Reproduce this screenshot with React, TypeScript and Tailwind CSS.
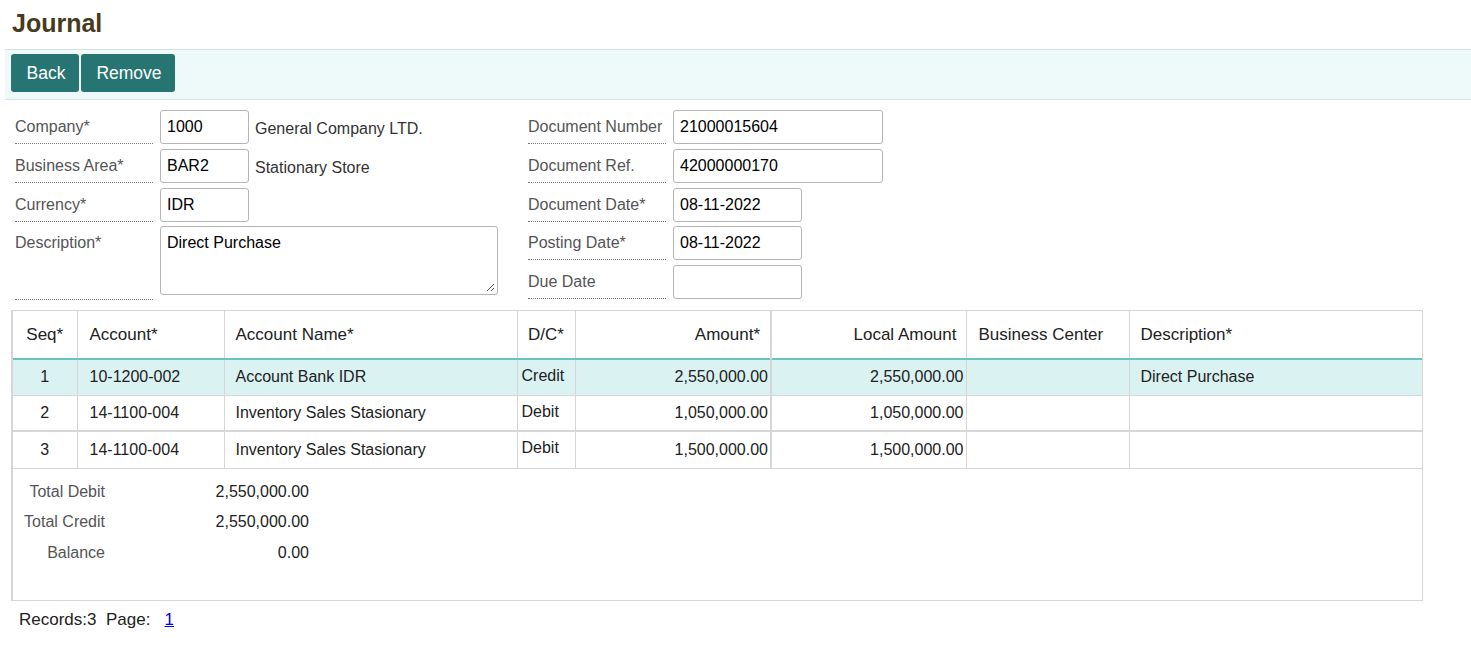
import React from "react";

const font = { fontFamily: '"Liberation Sans", Arial, sans-serif' };

function Label({ children, h = "h-[34px]" }: { children: React.ReactNode; h?: string }) {
  return (
    <div className={`w-[138px] ${h} border-b border-dotted border-[#777] text-[16px] text-[#555] pt-[5px] shrink-0`}>
      {children}
    </div>
  );
}

function Input({ w, value }: { w: string; value: string }) {
  return (
    <div className={`${w} h-[34px] border border-[#b5b5b5] rounded-[3px] px-[6px] flex items-center text-[16px] text-black bg-white shrink-0`}>
      {value}
    </div>
  );
}

const rows = [
  { seq: "1", acc: "10-1200-002", name: "Account Bank IDR", dc: "Credit", amt: "2,550,000.00", local: "2,550,000.00", desc: "Direct Purchase", sel: true },
  { seq: "2", acc: "14-1100-004", name: "Inventory Sales Stasionary", dc: "Debit", amt: "1,050,000.00", local: "1,050,000.00", desc: "", sel: false },
  { seq: "3", acc: "14-1100-004", name: "Inventory Sales Stasionary", dc: "Debit", amt: "1,500,000.00", local: "1,500,000.00", desc: "", sel: false },
];

export default function App() {
  return (
    <div className="w-[1471px] h-[659px] bg-white text-[#222]" style={font}>
      <h1 className="text-[25px] font-bold text-[#463b1c] pl-[12px] pt-[8px] h-[49px] leading-[30px]">Journal</h1>
      <div className="ml-[5px] h-[51px] border-t border-b border-[#d6e2e2] bg-[#eef9f9] flex items-start pt-[4px] gap-[2px] pl-[6px]">
        <button className="w-[68px] h-[38px] rounded-[3px] bg-[#277572] text-white text-[17.5px] pl-[2px]">Back</button>
        <button className="w-[94px] h-[38px] rounded-[3px] bg-[#277572] text-white text-[17.5px] pl-[2px]">Remove</button>
      </div>

      <div className="flex pt-[10px] pl-[15px]">
        <div className="w-[513px] flex flex-col gap-[5px]">
          <div className="flex gap-[7px] items-start">
            <Label>Company*</Label>
            <Input w="w-[89px]" value="1000" />
            <div className="text-[16px] text-[#333] pt-[7px] ml-[-1px]">General Company LTD.</div>
          </div>
          <div className="flex gap-[7px] items-start">
            <Label>Business Area*</Label>
            <Input w="w-[89px]" value="BAR2" />
            <div className="text-[16px] text-[#333] pt-[7px] ml-[-1px]">Stationary Store</div>
          </div>
          <div className="flex gap-[7px] items-start">
            <Label>Currency*</Label>
            <Input w="w-[89px]" value="IDR" />
          </div>
          <div className="flex gap-[7px] items-start mt-[-1px]">
            <Label h="h-[74px]">Description*</Label>
            <div className="relative w-[338px] h-[69px] border border-[#b5b5b5] rounded-[3px] px-[6px] pt-[4px] text-[16px] text-black">
              Direct Purchase
              <svg className="absolute right-[2px] bottom-[2px]" width="10" height="10" viewBox="0 0 10 10">
                <path d="M9 2 L2 9 M9 6 L6 9" stroke="#555" strokeWidth="1" />
              </svg>
            </div>
          </div>
        </div>
        <div className="flex flex-col gap-[5px]">
          <div className="flex gap-[7px]">
            <Label>Document Number</Label>
            <Input w="w-[210px]" value="21000015604" />
          </div>
          <div className="flex gap-[7px]">
            <Label>Document Ref.</Label>
            <Input w="w-[210px]" value="42000000170" />
          </div>
          <div className="flex gap-[7px]">
            <Label>Document Date*</Label>
            <Input w="w-[129px]" value="08-11-2022" />
          </div>
          <div className="flex gap-[7px] mt-[-1px]">
            <Label>Posting Date*</Label>
            <Input w="w-[129px]" value="08-11-2022" />
          </div>
          <div className="flex gap-[7px]">
            <Label>Due Date</Label>
            <Input w="w-[129px]" value="" />
          </div>
        </div>
      </div>

      <div className="ml-[11px] mt-[10px] w-[1412px] h-[291px] border-l-2 border-r border-t border-b border-[#d6d6d6] flex flex-col">
        <table className="table-fixed border-collapse w-[1409px] text-[16px] text-[#222]">
          <colgroup>
            <col className="w-[64px]" />
            <col className="w-[147px]" />
            <col className="w-[293px]" />
            <col className="w-[58px]" />
            <col className="w-[196px]" />
            <col className="w-[195px]" />
            <col className="w-[163px]" />
            <col className="w-[293px]" />
          </colgroup>
          <thead>
            <tr className="h-[48px] border-b-2 border-[#66c6be] text-[17px]">
              <th className="font-normal text-center border-r border-[#d6d6d6]">Seq*</th>
              <th className="font-normal text-left pl-[12px] border-r border-[#d6d6d6]">Account*</th>
              <th className="font-normal text-left pl-[11px] border-r border-[#d6d6d6]">Account Name*</th>
              <th className="font-normal text-center border-r border-[#d6d6d6]">D/C*</th>
              <th className="font-normal text-right pr-[10px] border-r-2 border-[#d6d6d6]">Amount*</th>
              <th className="font-normal text-right pr-[9px] border-r border-[#d6d6d6]">Local Amount</th>
              <th className="font-normal text-left pl-[12px] border-r border-[#d6d6d6]">Business Center</th>
              <th className="font-normal text-left pl-[11px]">Description*</th>
            </tr>
          </thead>
          <tbody>
            {rows.map((r, i) => (
              <tr
                key={i}
                className={`${i === 0 ? "h-[36px] bg-[#daf2f2]" : i === 1 ? "h-[36px]" : "h-[37px] border-t-2 border-[#d6d6d6]"} border-b border-[#d6d6d6]`}
              >
                <td className="text-center border-r border-[#d6d6d6]">{r.seq}</td>
                <td className="pl-[12px] border-r border-[#d6d6d6]">{r.acc}</td>
                <td className="pl-[11px] border-r border-[#d6d6d6]">{r.name}</td>
                <td className="pl-[4px] align-top pt-[4px] border-r border-[#d6d6d6]">{r.dc}</td>
                <td className="text-right pr-[2px] border-r-2 border-[#d6d6d6]">{r.amt}</td>
                <td className="text-right pr-[2px] border-r border-[#d6d6d6]">{r.local}</td>
                <td className="border-r border-[#d6d6d6]"></td>
                <td className="pl-[11px]">{r.desc}</td>
              </tr>
            ))}
          </tbody>
        </table>
        <div className="pt-[13px] flex flex-col gap-[10.5px] text-[16px]">
          {[
            ["Total Debit", "2,550,000.00"],
            ["Total Credit", "2,550,000.00"],
            ["Balance", "0.00"],
          ].map(([l, v]) => (
            <div key={l} className="flex h-[20px] items-center">
              <div className="w-[92px] text-right text-[#555]">{l}</div>
              <div className="w-[204px] text-right text-[#222]">{v}</div>
            </div>
          ))}
        </div>
      </div>

      <div className="pl-[19px] pt-[6px] text-[17px] text-[#222]">
        Records:3&nbsp; Page:&nbsp;&nbsp; <a className="text-[#0000ee] underline">1</a>
      </div>
    </div>
  );
}
